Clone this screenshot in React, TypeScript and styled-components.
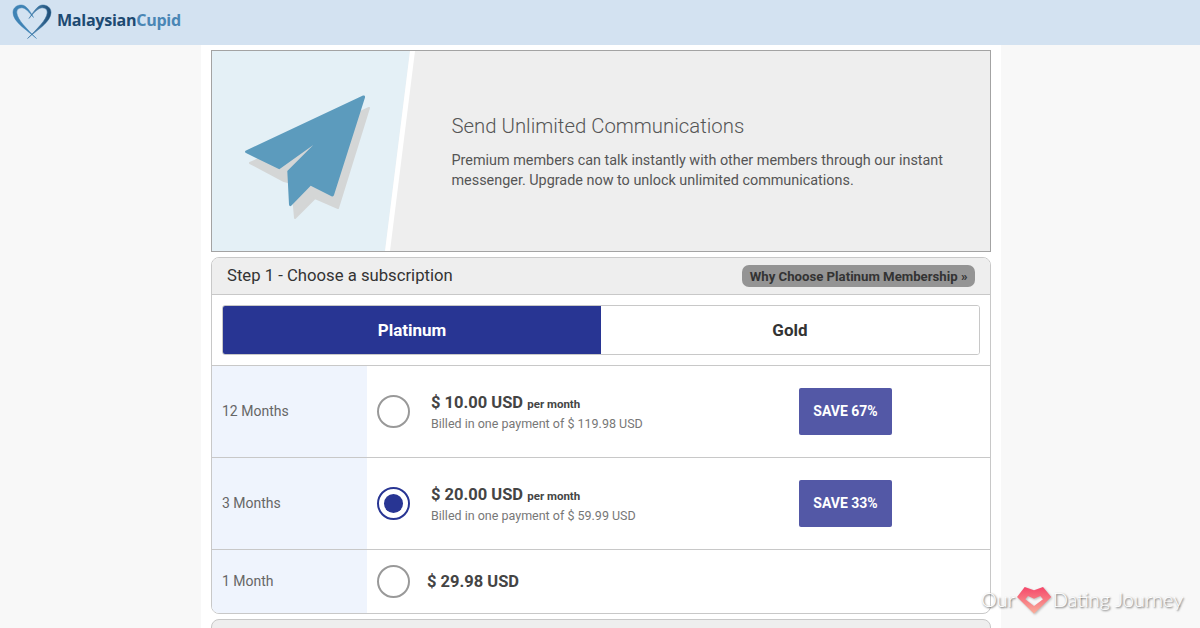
import styled, { createGlobalStyle } from "styled-components";

const GlobalStyle = createGlobalStyle`
  html, body {
    margin: 0;
    padding: 0;
    height: 628px;
    overflow: hidden;
    background: #f8f8f8;
    font-family: Roboto, "Liberation Sans", sans-serif;
  }
  * {
    box-sizing: border-box;
  }
`;

const Header = styled.header`
  height: 45px;
  background: #d3e2f1;
  display: flex;
  align-items: center;
  padding-left: 13px;
`;

const LogoMark = styled.svg`
  width: 38px;
  height: 34px;
  flex: none;
  margin-top: -1px;
  overflow: visible;
`;

const LogoText = styled.div`
  margin-left: 6px;
  margin-top: -5px;
  font-family: "Open Sans", sans-serif;
  font-size: 16.1px;
  font-weight: 700;
  letter-spacing: -0.3px;
  color: #1d4a72;

  span {
    color: #4a86b5;
  }
`;

const Page = styled.main`
  width: 800px;
  height: 583px;
  margin-left: 201px;
  padding: 5px 10px 0;
  background: #fff;
  overflow: hidden;
`;

const Banner = styled.section`
  height: 202px;
  border: 1px solid #a3a3a3;
  background: #eee;
  display: flex;
`;

const BannerArt = styled.svg`
  width: 210px;
  height: 200px;
  flex: none;
`;

const BannerCopy = styled.div`
  padding: 63px 40px 0 29.5px;
  flex: 1;
`;

const BannerTitle = styled.h2`
  margin: 0 0 13px;
  font-size: 20.35px;
  line-height: 24px;
  font-weight: 300;
  color: #555;
`;

const BannerText = styled.p`
  margin: 0;
  font-size: 14.4px;
  line-height: 20px;
  color: #555;
`;

const Panel = styled.section`
  margin-top: 5px;
  border: 1px solid #c8c8c8;
  border-radius: 8px;
  overflow: hidden;
`;

const PanelHead = styled.div`
  height: 37px;
  padding: 0 15px;
  background: #eee;
  border-bottom: 1px solid #c8c8c8;
  display: flex;
  align-items: center;
  justify-content: space-between;
`;

const PanelTitle = styled.h3`
  margin: 0 0 2px;
  font-size: 16.7px;
  font-weight: 400;
  color: #333;
`;

const WhyLink = styled.a`
  height: 22px;
  padding: 0 7.5px;
  border-radius: 7px;
  background: #949494;
  color: #333;
  font-size: 13.2px;
  font-weight: 700;
  line-height: 23px;
`;

const TabsRow = styled.div`
  height: 71px;
  padding: 10px;
  border-bottom: 1px solid #c8c8c8;
`;

const Tabs = styled.div`
  height: 50px;
  display: flex;
  border: 1px solid #c8c8c8;
  border-radius: 3px;
  overflow: hidden;
`;

const Tab = styled.div<{ $active?: boolean }>`
  flex: 1;
  display: flex;
  align-items: center;
  justify-content: center;
  font-size: 17px;
  font-weight: 700;
  background: ${(p) => (p.$active ? "#283593" : "#fff")};
  color: ${(p) => (p.$active ? "#fff" : "#333")};
`;

const Row = styled.div<{ $height: number; $last?: boolean }>`
  height: ${(p) => p.$height}px;
  display: flex;
  border-bottom: ${(p) => (p.$last ? "none" : "1px solid #c8c8c8")};
`;

const Term = styled.div`
  width: 155px;
  flex: none;
  padding: 0 0 2px 10px;
  background: #eff4fd;
  display: flex;
  align-items: center;
  font-size: 14px;
  color: #666;
`;

const Options = styled.div`
  flex: 1;
  display: flex;
  align-items: center;
  padding-left: 10px;
`;

const Radio = styled.span<{ $checked?: boolean }>`
  width: 33px;
  height: 33px;
  flex: none;
  border-radius: 50%;
  border: 2px solid ${(p) => (p.$checked ? "#283593" : "#999")};
  display: flex;
  align-items: center;
  justify-content: center;

  &::after {
    content: "";
    width: 19px;
    height: 19px;
    border-radius: 50%;
    background: ${(p) => (p.$checked ? "#283593" : "transparent")};
  }
`;

const PriceBlock = styled.div`
  width: 389px;
  flex: none;
  padding-left: 21px;
`;

const Price = styled.div`
  font-size: 16.5px;
  line-height: 22px;
  font-weight: 700;
  color: #444;

  small {
    font-size: 11.5px;
  }
`;

const Billed = styled.div`
  margin-top: 1px;
  font-size: 12.5px;
  line-height: 16px;
  color: #777;
`;

const SingleMonthPrice = styled(Price)`
  margin-left: 17px;
`;

const SaveBadge = styled.div`
  width: 93px;
  height: 47px;
  border-radius: 2px;
  background: #5358a6;
  color: #fff;
  font-size: 14px;
  font-weight: 700;
  padding-bottom: 2px;
  display: flex;
  align-items: center;
  justify-content: center;
`;

const NextPanel = styled.section`
  height: 30px;
  margin-top: 5px;
  border: 1px solid #c8c8c8;
  border-radius: 8px 8px 0 0;
  background: #eee;
`;

const Watermark = styled.div`
  position: absolute;
  left: 981px;
  top: 584px;
  display: flex;
  align-items: center;
  font-family: Lato, sans-serif;
  font-size: 20px;
  font-weight: 300;
  color: #fff;
  text-shadow: 1px 1px 2px rgba(0, 0, 0, 0.7);
`;

const WatermarkHeart = styled.svg`
  width: 36px;
  height: 30px;
  flex: none;
  margin: 0 1px;
  transform: translateY(2px);
  filter: drop-shadow(1px 1px 1px rgba(0, 0, 0, 0.25));
`;

const plans = [
  { term: "12 Months", price: "$ 10.00 USD", billed: "Billed in one payment of $ 119.98 USD", save: "SAVE 67%" },
  { term: "3 Months", price: "$ 20.00 USD", billed: "Billed in one payment of $ 59.99 USD", save: "SAVE 33%", checked: true },
];

export default function App() {
  return (
    <>
      <GlobalStyle />
      <Header>
        <LogoMark viewBox="0 0 38 34">
          <defs>
            <linearGradient id="logoRight" x1="0" y1="0" x2="1" y2="0">
              <stop offset="0" stopColor="#5b98c4" />
              <stop offset="1" stopColor="#1d4a72" />
            </linearGradient>
          </defs>
          <path
            d="M23.5 33.5C14 25 0 17 0 7.5C0 2.5 4 0 8.5 0C13 0 17 6 20.5 12.5C16 7 12 2.5 8.5 2.8C5 3 3.5 5 3.8 8C4.5 15 14 24 23.5 33.5Z"
            fill="#3f83b5"
            stroke="#3f83b5"
            strokeWidth="0.5"
          />
          <path
            d="M14.5 33.5C24 25 38 17 38 7.5C38 2.5 34 0 29.5 0C25 0 21 6 16 13.5C21 7 26 2.5 29.5 2.8C33 3 34.5 5 34.2 8C33.5 15 24 24 14.5 33.5Z"
            fill="url(#logoRight)"
            stroke="#2f6c9c"
            strokeWidth="0.5"
          />
        </LogoMark>
        <LogoText>
          Malaysian<span>Cupid</span>
        </LogoText>
      </Header>
      <Page>
        <Banner>
          <BannerArt viewBox="0 0 210 200">
            <polygon points="0,0 198,0 173,200 0,200" fill="#e4f0f6" />
            <polygon points="198,0 203,0 178,200 173,200" fill="#fff" />
            <polygon
              points="157,57 38,112 72,130 80,132 83,167 103,147 126,157"
              fill="#d4d6d6"
              stroke="#d4d6d6"
              strokeWidth="2"
              strokeLinejoin="round"
            />
            <path
              d="M151 44.5Q153.5 44 153 46.5L122 144Q121.5 146 119.5 145.3L98.7 134.7L79.5 154.5Q77.5 156.5 77 153.5L75.3 120L101.3 94L67.3 118.3L34 102Q32 100.5 34 99.5Z"
              fill="#5c9bbd"
            />
          </BannerArt>
          <BannerCopy>
            <BannerTitle>Send Unlimited Communications</BannerTitle>
            <BannerText>
              Premium members can talk instantly with other members through our instant messenger. Upgrade now to unlock
              unlimited communications.
            </BannerText>
          </BannerCopy>
        </Banner>
        <Panel>
          <PanelHead>
            <PanelTitle>Step 1 - Choose a subscription</PanelTitle>
            <WhyLink>Why Choose Platinum Membership »</WhyLink>
          </PanelHead>
          <TabsRow>
            <Tabs>
              <Tab $active>Platinum</Tab>
              <Tab>Gold</Tab>
            </Tabs>
          </TabsRow>
          {plans.map((plan) => (
            <Row $height={92} key={plan.term}>
              <Term>{plan.term}</Term>
              <Options>
                <Radio $checked={plan.checked} />
                <PriceBlock>
                  <Price>
                    {plan.price} <small>per month</small>
                  </Price>
                  <Billed>{plan.billed}</Billed>
                </PriceBlock>
                <SaveBadge>{plan.save}</SaveBadge>
              </Options>
            </Row>
          ))}
          <Row $height={63} $last>
            <Term>1 Month</Term>
            <Options>
              <Radio />
              <SingleMonthPrice>$ 29.98 USD</SingleMonthPrice>
            </Options>
          </Row>
        </Panel>
        <NextPanel />
      </Page>
      <Watermark>
        Our
        <WatermarkHeart viewBox="0 0 36 30">
          <defs>
            <linearGradient id="heartFill" x1="0" y1="0" x2="0" y2="1">
              <stop offset="0" stopColor="#f5476a" />
              <stop offset="1" stopColor="#f9b09c" />
            </linearGradient>
          </defs>
          <path
            d="M8.7 1L18 4.3L27 1L35.3 11L18 27.7L1 11ZM18 12.7L12 10L9.3 13.3L18 20L27 13.3L24.3 10Z"
            fillRule="evenodd"
            fill="url(#heartFill)"
          />
        </WatermarkHeart>
        Dating Journey
      </Watermark>
    </>
  );
}
